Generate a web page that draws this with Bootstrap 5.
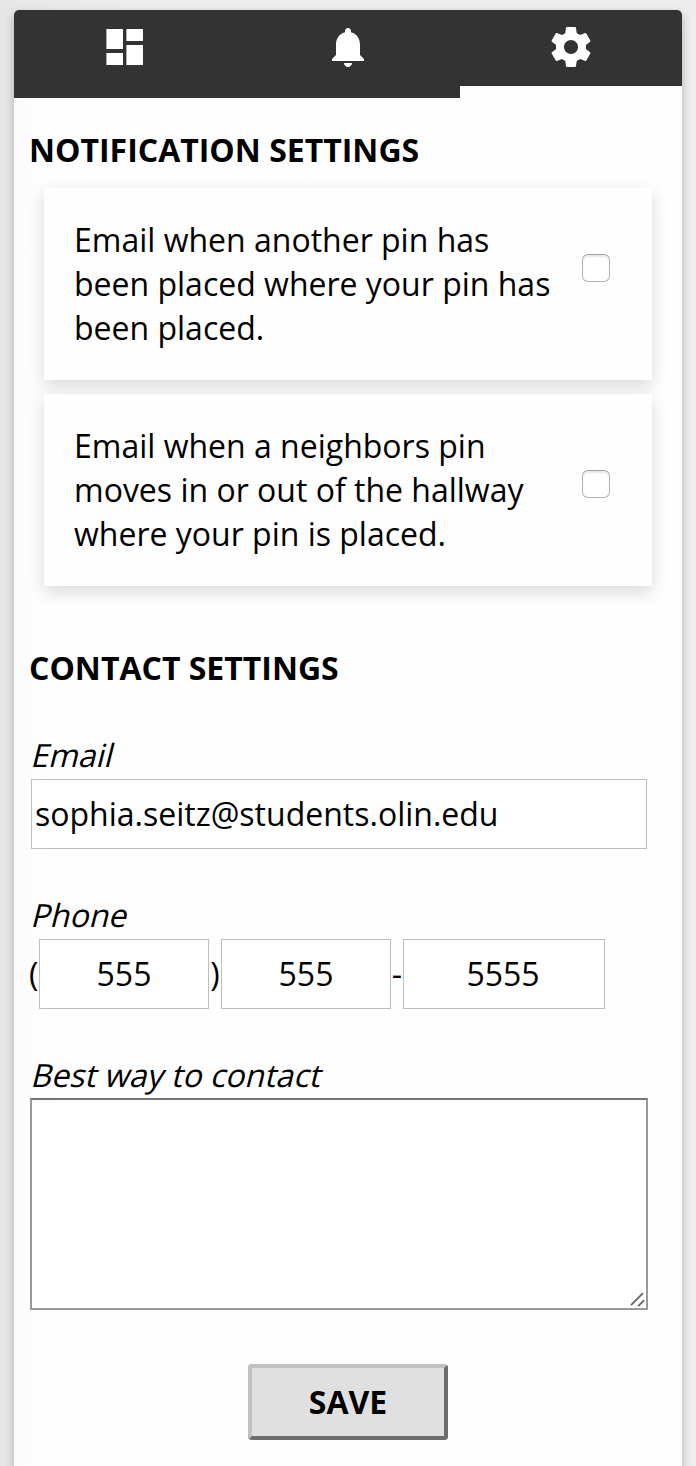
<!DOCTYPE html>
<html lang="en">
<head>
<meta charset="utf-8">
<meta name="viewport" content="width=device-width, initial-scale=1">
<title>Settings</title>
<link href="https://cdn.jsdelivr.net/npm/bootstrap@5.3.0/dist/css/bootstrap.min.css" rel="stylesheet">
<style>
  body { font-family: "Open Sans", sans-serif; font-size: 32px; line-height: 44px; color: #000; background: linear-gradient(90deg, #e6e6e6, #e9e9e9 40px, #ededed 120px, #ededed); height: 1466px; overflow: hidden; }
  .panel { width: 668px; height: 1490px; margin: 10px 0 0 14px; background: linear-gradient(90deg, #fcfcfc, #fefefe 36px, #fefefe); border-radius: 5px 5px 0 0; box-shadow: 0 4px 10px rgba(0,0,0,.26); }
  .tabs { height: 88px; background: #333; border-radius: 5px 5px 0 0; }
  .tab { border-bottom: 12px solid #333; padding-top: 13px; padding-right: 1px; width: 223px; }
  .tab.current { border-bottom-color: #fefefe; width: 222px; padding-right: 0; }
  .tab svg { width: 48px; height: 48px; fill: #fff; display: block; }
  .content { padding: 30px 16px 0; }
  .section-title { font-size: 32px; line-height: 44px; font-weight: 700; margin: 0 0 16px -1px; }
  .section-title.contact { margin-top: 60px; margin-bottom: 43px; }
  .option { width: 608px; height: 192px; margin-left: 14px; padding: 30px; background: #fefefe; box-shadow: 0 6px 16px rgba(0,0,0,.15); }
  .option label { width: 490px; white-space: nowrap; }
  .option .form-check-input { width: 28px; height: 28px; margin: 36px 0 0 18px; border: 1px solid #b4b4b4; border-top-color: #a4a4a4; border-radius: 6px; background-color: #fff; box-shadow: inset 0 2px 2px rgba(0,0,0,.1); }
  .option + .option { margin-top: 14px; }
  .option + .option .form-check-input { margin-top: 46px; }
  .field-label { display: block; width: fit-content; height: 46px; transform: skewX(-14deg); transform-origin: 0 34px; }
  .field-label.spaced { margin-top: 44px; }
  .field-label.notes-label { height: 45px; }
  .entry.form-control { height: 70px; padding: 0 4px 2px 3px; border: 1px solid #bdbdbd; border-radius: 0; font-size: 32px; line-height: 44px; color: #000; background: #fff; }
  .email { width: 616px; margin-left: 1px; }
  .entry.part { width: 170px; flex: none; padding-left: 4px; }
  .entry.part.line { width: 202px; padding-left: 3px; padding-right: 5px; }
  .mark-open { width: 9px; text-indent: -1px; }
  .mark-sep { width: 12px; text-align: center; }
  .notes.form-control { width: 618px; height: 212px; border: 2px solid #999; border-top-color: #737373; border-radius: 0; background: #fff; resize: none; }
  .grip { position: absolute; left: 600px; bottom: 3px; width: 16px; height: 16px; }
  .save { width: 200px; height: 76px; margin-top: 54px; padding: 0; border: 4px solid; border-color: #c1c1c1 #6d6d6d #6d6d6d #c1c1c1; border-radius: 4px; background: #e0e0e0; color: #000; font-size: 32px; line-height: 44px; font-weight: 700; }
</style>
</head>
<body>
<main class="panel">
  <nav class="tabs d-flex">
    <a class="tab d-flex justify-content-center align-items-start" href="#" aria-label="Dashboard"><svg viewBox="0 0 24 24"><path d="M2.7 13H11V3H2.7zM2.7 21H11v-6H2.7zM12.7 21H21V11h-8.3zM12.7 3v6H21V3z"/></svg></a>
    <a class="tab d-flex justify-content-center align-items-start" href="#" aria-label="Notifications"><svg viewBox="0 0 24 24"><path d="M12 22c1.1 0 2-.9 2-2h-4c0 1.1.89 2 2 2zm6-6v-5c0-3.07-1.64-5.64-4.5-6.32V4c0-.83-.67-1.5-1.5-1.5s-1.5.67-1.5 1.5v.68C7.63 5.36 6 7.92 6 11v5l-2 2v1h16v-1l-2-2z"/></svg></a>
    <a class="tab current d-flex justify-content-center align-items-start" href="#" aria-label="Settings"><svg viewBox="0 0 24 24"><path d="M19.43 12.98c.04-.32.07-.64.07-.98s-.03-.66-.07-.98l2.11-1.65c.19-.15.24-.42.12-.64l-2-3.46c-.12-.22-.39-.3-.61-.22l-2.49 1c-.52-.4-1.08-.73-1.69-.98l-.38-2.65C14.46 2.18 14.25 2 14 2h-4c-.25 0-.46.18-.49.42l-.38 2.65c-.61.25-1.17.59-1.69.98l-2.49-1c-.23-.09-.49 0-.61.22l-2 3.46c-.13.22-.07.49.12.64l2.11 1.65c-.04.32-.07.65-.07.98s.03.66.07.98l-2.11 1.65c-.19.15-.24.42-.12.64l2 3.46c.12.22.39.3.61.22l2.49-1c.52.4 1.08.73 1.69.98l.38 2.65c.03.24.24.42.49.42h4c.25 0 .46-.18.49-.42l.38-2.65c.61-.25 1.17-.59 1.69-.98l2.49 1c.23.09.49 0 .61-.22l2-3.46c.12-.22.07-.49-.12-.64l-2.11-1.65zM12 15.5c-1.93 0-3.5-1.57-3.5-3.5s1.57-3.5 3.5-3.5 3.5 1.57 3.5 3.5-1.57 3.5-3.5 3.5z"/></svg></a>
  </nav>
  <form class="content">
    <h2 class="section-title">NOTIFICATION SETTINGS</h2>
    <div class="option d-flex align-items-start">
      <label for="same">Email when another pin has<br>been placed where your pin has<br>been placed.</label>
      <input class="form-check-input" id="same" type="checkbox">
    </div>
    <div class="option d-flex align-items-start">
      <label for="hall">Email when a neighbors pin<br>moves in or out of the hallway<br>where your pin is placed.</label>
      <input class="form-check-input" id="hall" type="checkbox">
    </div>
    <h2 class="section-title contact">CONTACT SETTINGS</h2>
    <label class="field-label" for="email">Email</label>
    <input class="form-control entry email" id="email" type="text" value="sophia.seitz@students.olin.edu">
    <label class="field-label spaced" for="area">Phone</label>
    <div class="d-flex align-items-center">
      <span class="mark-open">(</span>
      <input class="form-control entry part text-center" id="area" type="text" value="555">
      <span class="mark-sep">)</span>
      <input class="form-control entry part text-center" type="text" value="555" aria-label="Prefix">
      <span class="mark-sep">-</span>
      <input class="form-control entry part line text-center" type="text" value="5555" aria-label="Line number">
    </div>
    <label class="field-label notes-label spaced" for="notes">Best way to contact</label>
    <div class="position-relative">
      <textarea class="form-control notes d-block" id="notes"></textarea>
      <svg class="grip" viewBox="0 0 16 16" fill="none" stroke="#666" stroke-width="1.9"><path d="M1 14.2 13 2.2M8.2 15.2l6-6"/></svg>
    </div>
    <div class="d-flex justify-content-center">
      <button class="save" type="button">SAVE</button>
    </div>
  </form>
</main>
<script src="https://cdn.jsdelivr.net/npm/bootstrap@5.3.0/dist/js/bootstrap.bundle.min.js"></script>
</body>
</html>
